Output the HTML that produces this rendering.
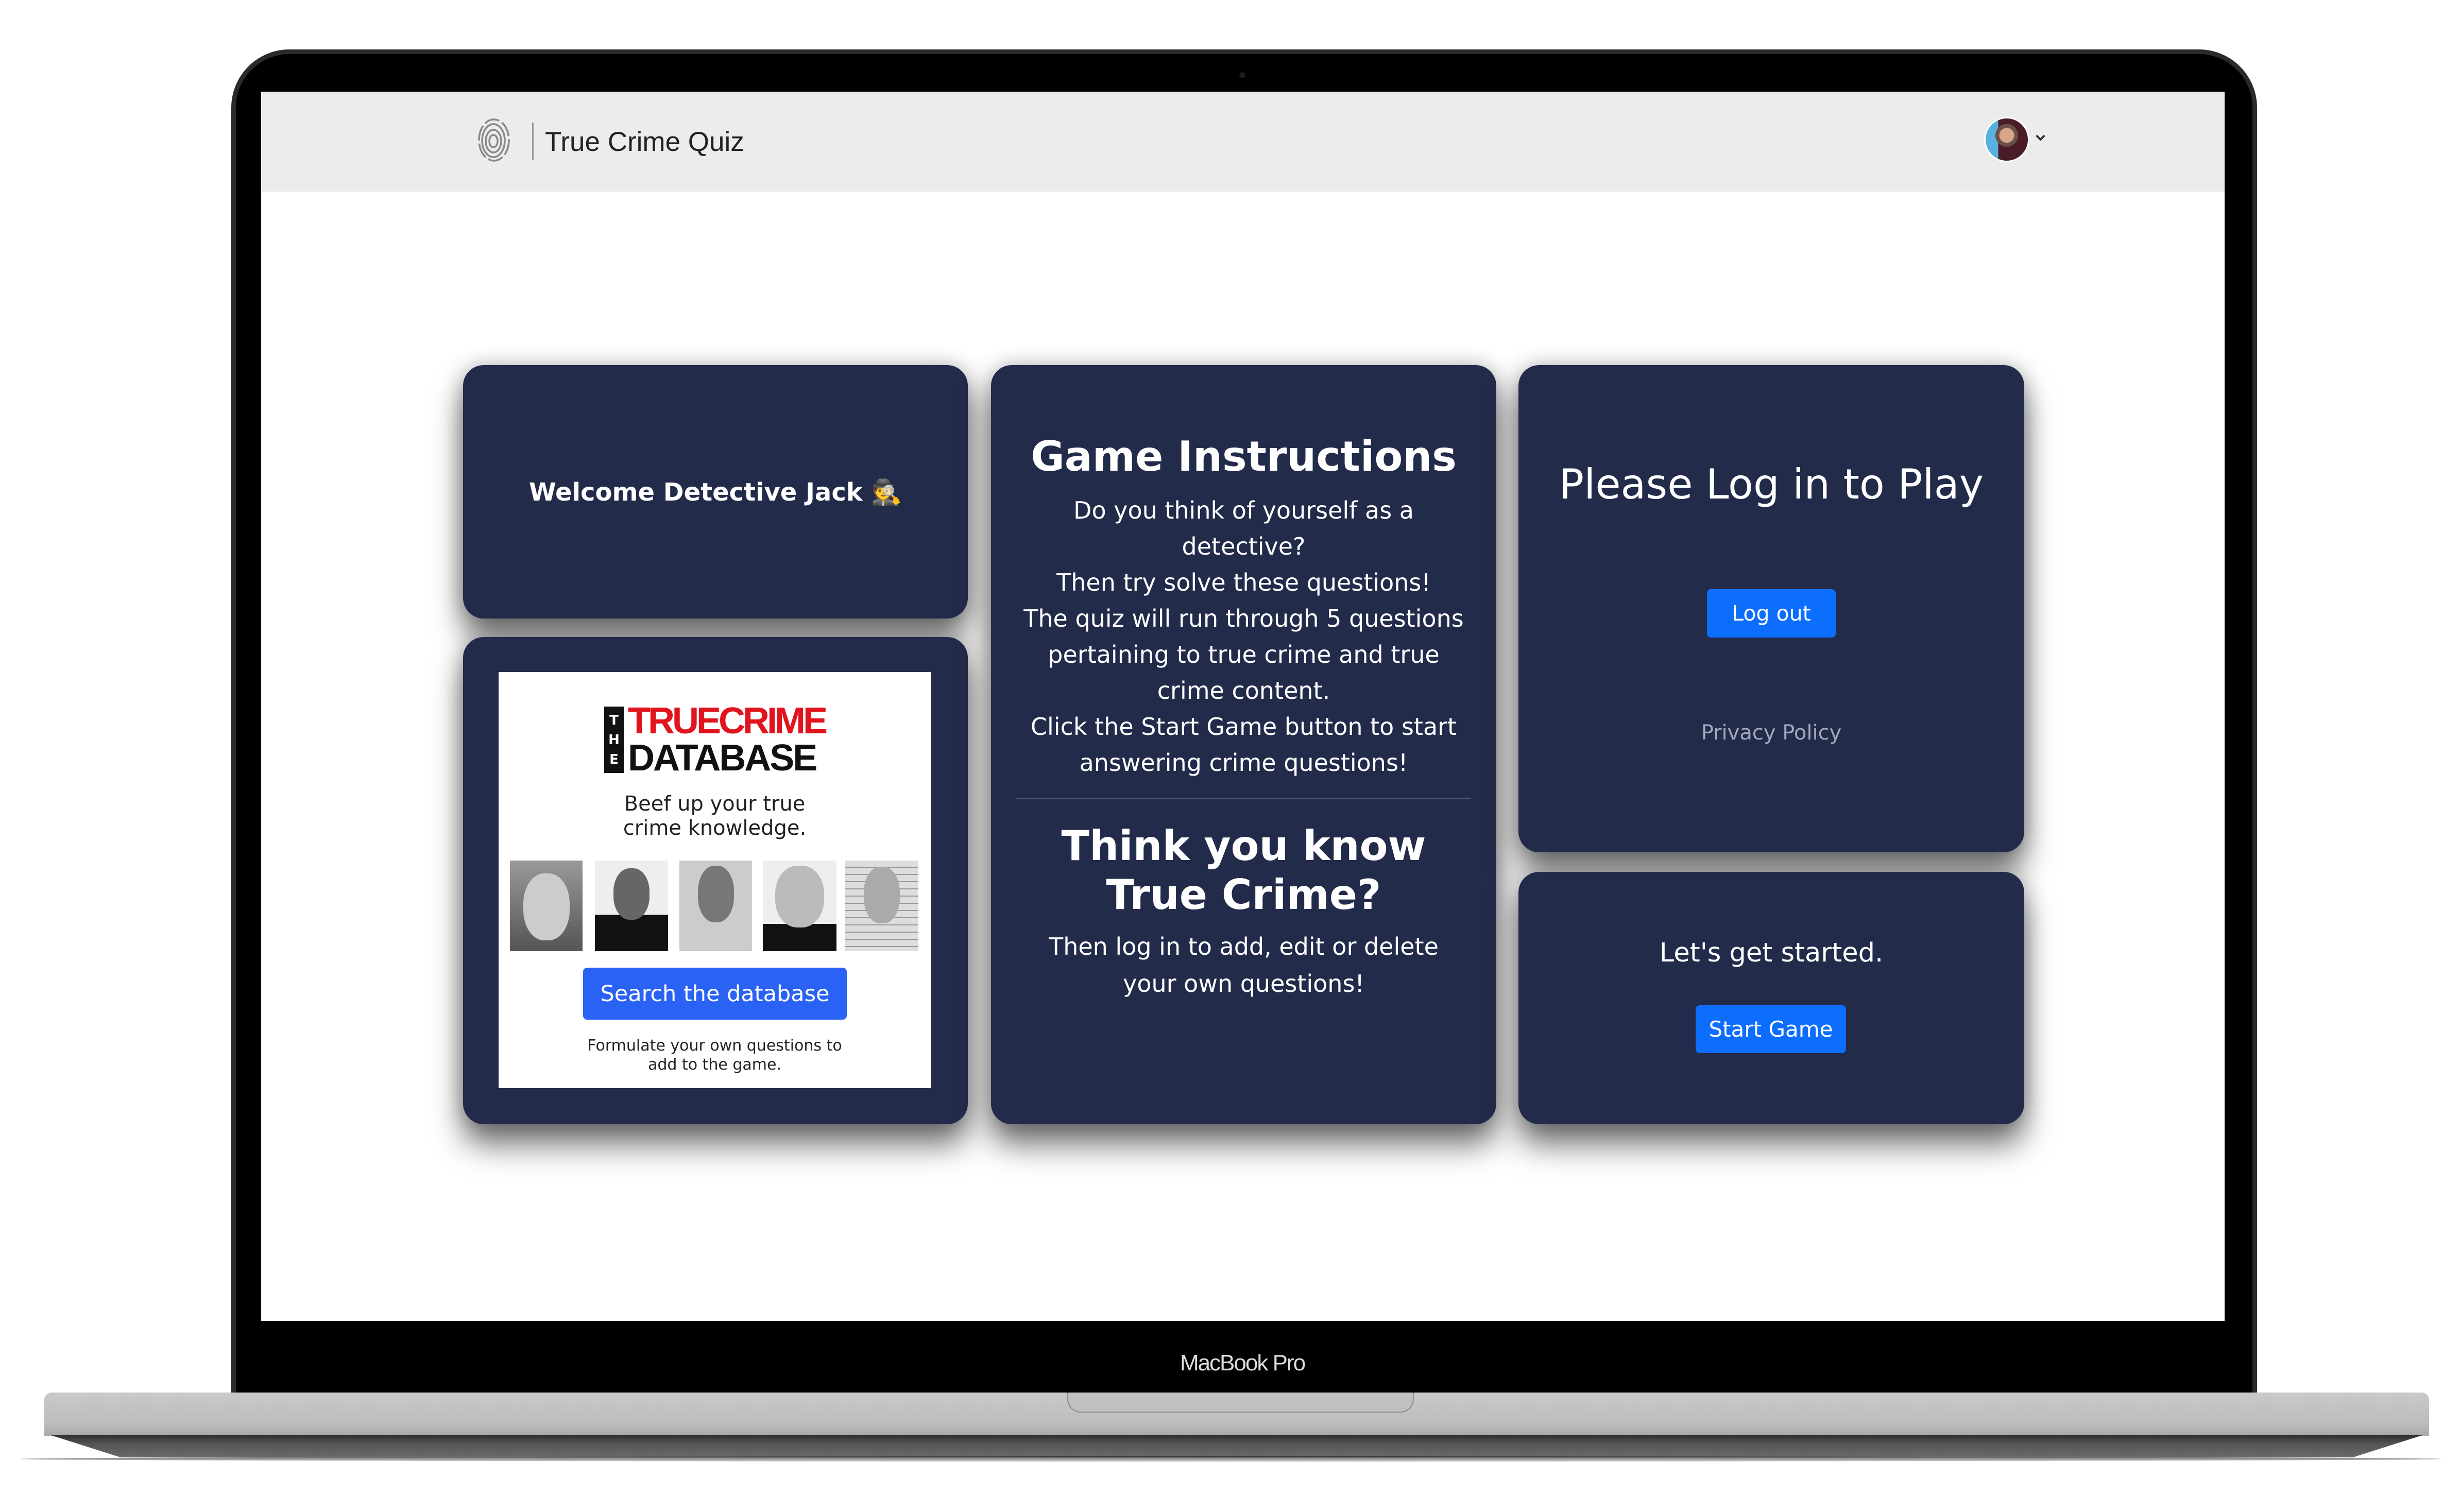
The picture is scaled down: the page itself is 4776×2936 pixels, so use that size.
<!DOCTYPE html>
<html><head><meta charset="utf-8">
<style>
*{margin:0;padding:0;box-sizing:border-box}
body{width:4776px;height:2936px;background:#fff;position:relative;overflow:hidden;font-family:"DejaVu Sans","Liberation Sans",sans-serif}
.abs{position:absolute}
.frame{left:449px;top:96px;width:3933px;height:2640px;background:#000;border-radius:113px 113px 0 0;border:9px solid #2a2a2a;border-bottom:none}
.screen{left:507px;top:178px;width:3812px;height:2387px;background:#fff}
.header{left:507px;top:178px;width:3812px;height:194px;background:#ececec}
.card{background:#232b4a;border-radius:40px;box-shadow:0 40px 60px rgba(0,0,0,.55),0 0 40px rgba(0,0,0,.25);color:#fff;text-align:center}
.btn{background:#0d6efd;border-radius:8px;color:#fff;display:flex;align-items:center;justify-content:center}
.ph{background:#ddd;overflow:hidden}
</style></head><body>
<div class="abs frame"></div>
<div class="abs" style="left:2406px;top:140px;width:12px;height:12px;border-radius:50%;background:#1a1a1a"></div>
<div class="abs screen"></div>
<div class="abs header"></div>
<svg class="abs" style="left:925px;top:228px" width="66" height="88" viewBox="0 0 66 88" fill="none" stroke="#888" stroke-width="3.5">
<ellipse cx="33" cy="46" rx="8" ry="12"/><ellipse cx="33" cy="46" rx="15" ry="22"/><ellipse cx="33" cy="45" rx="22" ry="32"/><ellipse cx="34" cy="44" rx="29" ry="40" stroke-dasharray="30 6"/>
</svg>
<div class="abs" style="left:1033px;top:238px;width:3px;height:72px;background:#999"></div>
<div class="abs" style="left:1058px;top:236px;font-family:'Liberation Sans',sans-serif;font-size:53px;color:#222;line-height:80px">True Crime Quiz</div>
<div class="abs" style="left:3852px;top:227px;width:88px;height:88px;border-radius:50%;background:radial-gradient(circle at 50% 40%,#d9a58a 0 22%,#6b5048 23% 34%,transparent 35%),linear-gradient(90deg,#5ab0e0 0 30%,#4a1c28 30%);border:3px solid #fff"></div>
<div class="abs" style="left:3955px;top:258px;width:13px;height:13px;border-right:4px solid #333;border-bottom:4px solid #333;transform:rotate(45deg)"></div>

<div class="abs card" style="left:899px;top:709px;width:980px;height:492px;display:flex;align-items:center;justify-content:center;font-weight:bold;font-size:48px">Welcome Detective Jack 🕵️</div>
<div class="abs card" style="left:899px;top:1237px;width:980px;height:946px"></div>
<div class="abs" style="left:968px;top:1305px;width:839px;height:808px;background:#fff"></div>
<div class="abs" style="left:1173px;top:1372px;width:38px;height:129px;background:#111;color:#fff;font-size:26px;font-weight:bold;line-height:38px;text-align:center;padding-top:8px">T<br>H<br>E</div>
<div class="abs" style="left:1219px;top:1364px;font-family:'Liberation Sans',sans-serif;font-weight:bold;font-size:72px;color:#e0141c;letter-spacing:-5px;line-height:72px">TRUECRIME</div>
<div class="abs" style="left:1219px;top:1436px;font-family:'Liberation Sans',sans-serif;font-weight:bold;font-size:72px;color:#111;letter-spacing:-3px;line-height:72px">DATABASE</div>
<div class="abs" style="left:968px;top:1538px;width:839px;text-align:center;font-size:40px;line-height:47px;color:#222">Beef up your true<br>crime knowledge.</div>
<div class="abs ph" style="left:990px;top:1671px;width:141px;height:176px;background:linear-gradient(#999,#555)"><div style="margin:25px auto;width:90px;height:130px;border-radius:45%;background:#ccc"></div></div>
<div class="abs ph" style="left:1155px;top:1671px;width:142px;height:176px;background:linear-gradient(#eee 60%,#111 60%)"><div style="margin:15px auto;width:70px;height:100px;border-radius:45%;background:#666"></div></div>
<div class="abs ph" style="left:1319px;top:1671px;width:141px;height:176px;background:#ccc"><div style="margin:10px auto;width:70px;height:110px;border-radius:45%;background:#777"></div></div>
<div class="abs ph" style="left:1481px;top:1671px;width:143px;height:176px;background:linear-gradient(#eee 70%,#111 70%)"><div style="margin:10px auto;width:95px;height:120px;border-radius:45%;background:#bbb"></div></div>
<div class="abs ph" style="left:1640px;top:1671px;width:143px;height:176px;background:repeating-linear-gradient(#ddd 0 12px,#999 12px 14px)"><div style="margin:12px auto;width:70px;height:110px;border-radius:45%;background:#aaa"></div></div>
<div class="abs btn" style="left:1132px;top:1879px;width:512px;height:101px;background:#2a62f4;font-size:43px">Search the database</div>
<div class="abs" style="left:968px;top:2012px;width:839px;text-align:center;font-size:30px;line-height:37px;color:#222">Formulate your own questions to<br>add to the game.</div>

<div class="abs card" style="left:1924px;top:709px;width:981px;height:1474px"></div>
<div class="abs" style="left:1924px;top:832px;width:981px;text-align:center;color:#fff">
<div style="font-weight:bold;font-size:80px;line-height:110px;margin-bottom:14px">Game Instructions</div>
<div style="font-size:46px;line-height:70px;padding:0 40px">Do you think of yourself as a<br>detective?<br>Then try solve these questions!<br>The quiz will run through 5 questions<br>pertaining to true crime and true<br>crime content.<br>Click the Start Game button to start<br>answering crime questions!</div>
</div>
<div class="abs" style="left:1972px;top:1550px;width:884px;height:2px;background:#4d5675"></div>
<div class="abs" style="left:1924px;top:1595px;width:981px;text-align:center;color:#fff;font-weight:bold;font-size:80px;line-height:95px">Think you know<br>True Crime?</div>
<div class="abs" style="left:1924px;top:1802px;width:981px;text-align:center;color:#fff;font-size:46px;line-height:72px">Then log in to add, edit or delete<br>your own questions!</div>

<div class="abs card" style="left:2948px;top:709px;width:982px;height:946px"></div>
<div class="abs" style="left:2948px;top:886px;width:982px;text-align:center;color:#fff;font-size:80px;line-height:110px">Please Log in to Play</div>
<div class="abs btn" style="left:3314px;top:1144px;width:250px;height:94px;font-size:41px">Log out</div>
<div class="abs" style="left:2948px;top:1393px;width:982px;text-align:center;color:#a3a8ba;font-size:40px;line-height:60px">Privacy Policy</div>
<div class="abs card" style="left:2948px;top:1693px;width:982px;height:490px"></div>
<div class="abs" style="left:2948px;top:1816px;width:982px;text-align:center;color:#fff;font-size:51px;line-height:70px">Let's get started.</div>
<div class="abs btn" style="left:3292px;top:1952px;width:292px;height:93px;font-size:42px">Start Game</div>

<div class="abs" style="left:2212px;top:2615px;width:400px;text-align:center;color:#ddd;font-family:'Liberation Sans',sans-serif;font-size:44px;letter-spacing:-2px;line-height:64px">MacBook Pro</div>
<div class="abs" style="left:86px;top:2704px;width:4630px;height:84px;background:linear-gradient(#c9c9c9,#bdbdbd 70%,#a9a9a9);border-radius:14px 14px 0 0"></div>
<div class="abs" style="left:2072px;top:2704px;width:673px;height:39px;background:#c0c0c0;border:2px solid #8d8d8d;border-top:none;border-radius:0 0 26px 26px"></div>
<div class="abs" style="left:96px;top:2786px;width:4610px;height:44px;background:linear-gradient(#2c2c2c,#555 40%,#6a6a6a);clip-path:polygon(0 0,100% 0,97% 100%,3% 100%)"></div>
<div class="abs" style="left:40px;top:2828px;width:4700px;height:10px;background:linear-gradient(#000,#aaa);opacity:.6;border-radius:50%"></div>
</body></html>
